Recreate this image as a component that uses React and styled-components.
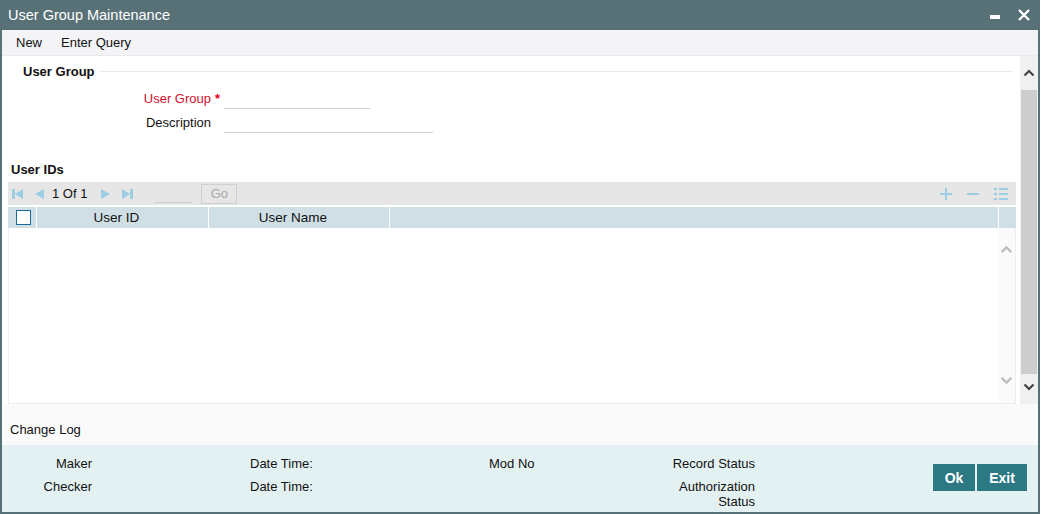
import React from "react";
import styled, { createGlobalStyle } from "styled-components";

const GlobalStyle = createGlobalStyle`
  html, body {
    margin: 0;
    padding: 0;
    background: #ffffff;
  }
  body {
    font-family: "Liberation Sans", Arial, sans-serif;
    font-size: 13px;
    color: #111;
  }
  * {
    box-sizing: border-box;
  }
`;

const Chevron = ({ dir = "up", color = "#555", size = 12 }) => (
  <svg width={size} height={size} viewBox="0 0 12 12">
    <path
      d={dir === "up" ? "M1.5 8.5 L6 4 L10.5 8.5" : "M1.5 3.5 L6 8 L10.5 3.5"}
      fill="none"
      stroke={color}
      strokeWidth="2.2"
    />
  </svg>
);

const NavIcon = ({ kind }) => {
  const c = "#9ccde3";
  if (kind === "first")
    return (
      <svg width="11" height="12" viewBox="0 0 11 12">
        <rect x="0" y="1" width="3" height="10" fill={c} />
        <path d="M11 1 L3 6 L11 11 Z" fill={c} />
      </svg>
    );
  if (kind === "prev")
    return (
      <svg width="10" height="12" viewBox="0 0 10 12">
        <path d="M10 1 L1 6 L10 11 Z" fill={c} />
      </svg>
    );
  if (kind === "next")
    return (
      <svg width="10" height="12" viewBox="0 0 10 12">
        <path d="M0 1 L9 6 L0 11 Z" fill={c} />
      </svg>
    );
  return (
    <svg width="11" height="12" viewBox="0 0 11 12">
      <path d="M0 1 L8 6 L0 11 Z" fill={c} />
      <rect x="8" y="1" width="3" height="10" fill={c} />
    </svg>
  );
};

const ToolIcon = ({ kind }) => {
  const c = "#9ccde3";
  if (kind === "plus")
    return (
      <svg width="12" height="12" viewBox="0 0 12 12">
        <rect x="5" y="0" width="2" height="12" fill={c} />
        <rect x="0" y="5" width="12" height="2" fill={c} />
      </svg>
    );
  if (kind === "minus")
    return (
      <svg width="12" height="12" viewBox="0 0 12 12">
        <rect x="0" y="5" width="12" height="2" fill={c} />
      </svg>
    );
  return (
    <svg width="14" height="12" viewBox="0 0 14 12">
      <rect x="0" y="0" width="3" height="2" fill={c} />
      <rect x="5" y="0" width="9" height="2" fill={c} />
      <rect x="0" y="5" width="3" height="2" fill={c} />
      <rect x="5" y="5" width="9" height="2" fill={c} />
      <rect x="0" y="10" width="3" height="2" fill={c} />
      <rect x="5" y="10" width="9" height="2" fill={c} />
    </svg>
  );
};

const App = () => {
  return (
    <>
      <GlobalStyle />
      <Window>
        <TitleBar>
          <Title>User Group Maintenance</Title>
          <WindowButtons>
            <svg width="10" height="4" viewBox="0 0 10 4">
              <rect width="10" height="4" fill="#fff" />
            </svg>
            <svg width="12" height="12" viewBox="0 0 12 12">
              <path d="M1 1 L11 11 M11 1 L1 11" stroke="#fff" strokeWidth="2.4" />
            </svg>
          </WindowButtons>
        </TitleBar>

        <Toolbar>
          <ToolLink>New</ToolLink>
          <ToolLink>Enter Query</ToolLink>
        </Toolbar>

        <Main>
          <Content>
            <Legend>
              <LegendText>User Group</LegendText>
              <LegendLine />
            </Legend>

            <Fields>
              <FieldRow>
                <Label $required>User Group</Label>
                <Marker>*</Marker>
                <Input $width={146} />
              </FieldRow>
              <FieldRow>
                <Label>Description</Label>
                <Marker />
                <Input $width={209} />
              </FieldRow>
            </Fields>

            <SectionTitle>User IDs</SectionTitle>

            <Grid>
              <GridToolbar>
                <Pager>
                  <NavIcon kind="first" />
                  <NavIcon kind="prev" />
                  <PageText>1 Of 1</PageText>
                  <NavIcon kind="next" />
                  <NavIcon kind="last" />
                  <PageInput />
                  <GoButton>Go</GoButton>
                </Pager>
                <GridTools>
                  <ToolIcon kind="plus" />
                  <ToolIcon kind="minus" />
                  <ToolIcon kind="list" />
                </GridTools>
              </GridToolbar>
              <HeaderRow>
                <HeaderCell $width={29}>
                  <CheckBox />
                </HeaderCell>
                <HeaderCell $width={172} $shift>
                  User ID
                </HeaderCell>
                <HeaderCell $width={181} $shift>
                  User Name
                </HeaderCell>
                <HeaderCell $grow />
                <HeaderCell $width={17} $last />
              </HeaderRow>
              <GridBody>
                <GridRows />
                <GridScroll>
                  <Chevron dir="up" color="#bdbdbd" size={13} />
                  <Chevron dir="down" color="#bdbdbd" size={13} />
                </GridScroll>
              </GridBody>
            </Grid>
          </Content>

          <Scrollbar>
            <ScrollArrow>
              <Chevron dir="up" color="#444" size={12} />
            </ScrollArrow>
            <Thumb />
            <ScrollArrow>
              <Chevron dir="down" color="#444" size={12} />
            </ScrollArrow>
          </Scrollbar>
        </Main>

        <ChangeLog>Change Log</ChangeLog>

        <Footer>
          <FooterCol $width={90} $right>
            <FooterText>Maker</FooterText>
            <FooterText>Checker</FooterText>
          </FooterCol>
          <FooterCol $width={150} $offset={158}>
            <FooterText>Date Time:</FooterText>
            <FooterText>Date Time:</FooterText>
          </FooterCol>
          <FooterCol $width={120} $offset={89}>
            <FooterText>Mod No</FooterText>
          </FooterCol>
          <FooterCol $width={120} $offset={26} $right>
            <FooterText>Record Status</FooterText>
            <FooterText>
              Authorization
              <br />
              Status
            </FooterText>
          </FooterCol>
          <Buttons>
            <ActionButton $width={42}>Ok</ActionButton>
            <ActionButton $width={50}>Exit</ActionButton>
          </Buttons>
        </Footer>
      </Window>
    </>
  );
};

export default App;

const Window = styled.div`
  width: 1040px;
  height: 514px;
  border: 2px solid #587177;
  border-top: none;
  display: flex;
  flex-direction: column;
  background: #ffffff;
  overflow: hidden;
`;

const TitleBar = styled.div`
  height: 30px;
  flex: none;
  background: #587177;
  display: flex;
  align-items: center;
  justify-content: space-between;
  margin: 0 -2px;
  padding: 0 8px;
`;

const Title = styled.div`
  color: #ffffff;
  font-size: 14.5px;
`;

const WindowButtons = styled.div`
  display: flex;
  align-items: center;
  gap: 18px;
  padding-right: 2px;

  svg:first-child {
    margin-top: 4px;
  }
`;

const Toolbar = styled.div`
  height: 26px;
  flex: none;
  background: #f4f4f6;
  border-bottom: 1px solid #e9e9ec;
  display: flex;
  align-items: center;
  gap: 19px;
  padding-left: 14px;
`;

const ToolLink = styled.span`
  font-size: 13px;
  color: #111;
`;

const Main = styled.div`
  height: 348px;
  flex: none;
  display: flex;
`;

const Content = styled.div`
  flex: 1;
  padding: 8px 3px 0 6px;
  display: flex;
  flex-direction: column;
`;

const Legend = styled.div`
  display: flex;
  align-items: center;
  padding-left: 15px;
  height: 14px;
  margin-right: 4px;
`;

const LegendText = styled.span`
  font-weight: bold;
  font-size: 13px;
`;

const LegendLine = styled.div`
  flex: 1;
  height: 1px;
  background: #e8eaec;
  margin-left: 4px;
`;

const Fields = styled.div`
  margin-top: 7px;
  display: flex;
  flex-direction: column;
`;

const FieldRow = styled.div`
  display: flex;
  align-items: flex-end;
  height: 24px;
`;

const Label = styled.div`
  width: 203px;
  text-align: right;
  color: ${(p) => (p.$required ? "#d0112b" : "#111")};
  font-size: 13px;
  padding-bottom: 3px;
`;

const Marker = styled.div`
  width: 13px;
  padding: 0 0 3px 4px;
  color: #e4001b;
  font-weight: bold;
  font-size: 13px;
`;

const Input = styled.div`
  width: ${(p) => p.$width}px;
  height: 20px;
  border-bottom: 1px solid #cfd3d6;
`;

const SectionTitle = styled.div`
  font-weight: bold;
  font-size: 13px;
  margin-top: 29px;
  padding-left: 3px;
  height: 16px;
`;

const Grid = styled.div`
  margin-top: 4px;
  display: flex;
  flex-direction: column;
  flex: 1;
  padding-right: 1px;
`;

const GridToolbar = styled.div`
  height: 23px;
  flex: none;
  background: #e6e6e6;
  display: flex;
  align-items: center;
  justify-content: space-between;
  padding: 0 8px 0 4px;
`;

const Pager = styled.div`
  display: flex;
  align-items: center;
  gap: 11px;
`;

const PageText = styled.span`
  font-size: 13px;
  margin: 0 3px 0 -3px;
  color: #111;
`;

const PageInput = styled.div`
  width: 38px;
  height: 18px;
  border-bottom: 1px solid #cfcfcf;
  margin-left: 10px;
`;

const GoButton = styled.div`
  width: 36px;
  height: 20px;
  border: 1px solid #cfcfcf;
  color: #a6a6a6;
  font-size: 13px;
  display: flex;
  align-items: center;
  justify-content: center;
  margin-left: -2px;
`;

const GridTools = styled.div`
  display: flex;
  align-items: center;
  gap: 15px;
`;

const HeaderRow = styled.div`
  margin-top: 2px;
  height: 21px;
  flex: none;
  display: flex;
  background: #d0dfe5;
`;

const HeaderCell = styled.div`
  width: ${(p) => (p.$width ? `${p.$width}px` : "auto")};
  flex: ${(p) => (p.$grow ? "1" : "none")};
  border-right: ${(p) => (p.$last ? "none" : "1px solid #ffffff")};
  padding-right: ${(p) => (p.$shift ? "12px" : "0")};
  display: flex;
  align-items: center;
  justify-content: center;
  font-size: 13.5px;
  color: #111;
`;

const CheckBox = styled.div`
  width: 15px;
  height: 15px;
  border: 1px solid #1a6b9a;
  background: #ffffff;
  margin-left: 2px;
`;

const GridBody = styled.div`
  flex: 1;
  display: flex;
  border: 1px solid #eeeef2;
  border-top: none;
`;

const GridRows = styled.div`
  flex: 1;
`;

const GridScroll = styled.div`
  width: 17px;
  background: #fafafa;
  display: flex;
  flex-direction: column;
  justify-content: space-between;
  align-items: center;
  padding: 15px 0 16px;
`;

const Scrollbar = styled.div`
  width: 18px;
  flex: none;
  background: #f0f0f0;
  display: flex;
  flex-direction: column;
`;

const ScrollArrow = styled.div`
  height: 34px;
  display: flex;
  align-items: center;
  justify-content: center;
`;

const Thumb = styled.div`
  flex: 1;
  background: #cdcdcd;
  margin: 0 1px -4px;
`;

const ChangeLog = styled.div`
  height: 41px;
  flex: none;
  background: #fafafa;
  display: flex;
  align-items: center;
  padding: 10px 0 0 8px;
  font-size: 13px;
`;

const Footer = styled.div`
  flex: 1;
  background: #e4f1f3;
  display: flex;
  padding: 11px 11px 0 0;
`;

const FooterCol = styled.div`
  width: ${(p) => p.$width}px;
  margin-left: ${(p) => p.$offset || 0}px;
  text-align: ${(p) => (p.$right ? "right" : "left")};
  display: flex;
  flex-direction: column;
  gap: 8px;
`;

const FooterText = styled.div`
  font-size: 13px;
  line-height: 15px;
  color: #111;
`;

const Buttons = styled.div`
  margin-left: auto;
  margin-top: 8px;
  display: flex;
  gap: 2px;
  align-self: flex-start;
`;

const ActionButton = styled.div`
  width: ${(p) => p.$width}px;
  height: 27px;
  background: #2c7984;
  color: #ffffff;
  font-weight: bold;
  font-size: 14px;
  display: flex;
  align-items: center;
  justify-content: center;
`;
